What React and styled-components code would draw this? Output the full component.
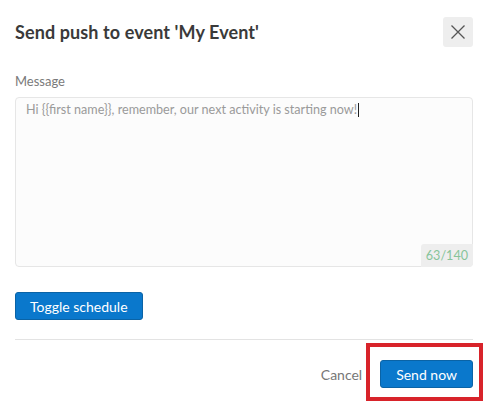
import React from 'react';
import styled, { createGlobalStyle } from 'styled-components';

const GlobalStyle = createGlobalStyle`
  html, body {
    margin: 0;
    padding: 0;
    background: #fff;
  }
  body {
    font-family: Lato, "Open Sans", "Liberation Sans", sans-serif;
    color: #333;
  }
  * {
    box-sizing: border-box;
  }
`;

const Modal = styled.div`
  width: 488px;
  height: 407px;
  padding: 17px 15px 0;
  display: flex;
  flex-direction: column;
`;

const Header = styled.div`
  display: flex;
  align-items: center;
  justify-content: space-between;
  height: 30px;
`;

const Title = styled.h2`
  margin: 0;
  font-size: 18px;
  font-weight: 700;
  color: #3a3a3a;
  letter-spacing: 0.1px;
`;

const CloseButton = styled.button`
  width: 30px;
  height: 30px;
  padding: 0;
  border: none;
  border-radius: 3px;
  background: #eeeeee;
  display: flex;
  align-items: center;
  justify-content: center;
  cursor: pointer;
`;

const Label = styled.label`
  display: block;
  margin-top: 26px;
  font-size: 13px;
  line-height: 16px;
  color: #7a7a7a;
`;

const MessageBox = styled.div`
  position: relative;
  margin-top: 8px;
  height: 170px;
  border: 1px solid #e6e6e6;
  border-radius: 4px;
  background: #fcfcfc;
  padding: 4px 10px;
  font-size: 12.6px;
  line-height: 16px;
  color: #9a9a9a;
`;

const Caret = styled.span`
  display: inline-block;
  width: 1px;
  height: 14px;
  margin-left: 1px;
  vertical-align: -3px;
  background: #222;
`;

const Counter = styled.span`
  position: absolute;
  right: -1px;
  bottom: -1px;
  padding: 3px 5px 3px 5px;
  border-radius: 3px 0 4px 0;
  background: #eeeeee;
  font-size: 12.6px;
  line-height: 17px;
  color: #86c49a;
`;

const Button = styled.button`
  height: 28px;
  padding: 0 ${({ $wide }) => ($wide ? '15px' : '14px')};
  border: 1px solid #0a63a6;
  border-radius: 3px;
  background: #0a78cc;
  color: #fff;
  font-family: inherit;
  font-size: 14px;
  cursor: pointer;
`;

const ScheduleRow = styled.div`
  margin-top: 25px;
`;

const Divider = styled.hr`
  margin: 19px 0 0;
  border: none;
  border-top: 1px solid #e3e3e3;
`;

const Footer = styled.div`
  display: flex;
  align-items: center;
  justify-content: flex-end;
  gap: 18px;
  margin-top: 20px;
`;

const CancelLink = styled.button`
  border: none;
  background: none;
  padding: 0;
  font-family: inherit;
  font-size: 14px;
  color: #777;
  cursor: pointer;
`;

const Highlight = styled.div`
  position: relative;
  &::after {
    content: '';
    position: absolute;
    left: -14px;
    right: -10px;
    top: -17px;
    bottom: -13px;
    border: 4px solid #d8232a;
    pointer-events: none;
  }
`;

const CloseIcon = () => (
  <svg width="16" height="16" viewBox="0 0 16 16" fill="none">
    <path d="M1.5 1.5L14.5 14.5M14.5 1.5L1.5 14.5" stroke="#555" strokeWidth="1.3" />
  </svg>
);

export default function App() {
  return (
    <>
      <GlobalStyle />
      <Modal>
        <Header>
          <Title>Send push to event 'My Event'</Title>
          <CloseButton aria-label="Close">
            <CloseIcon />
          </CloseButton>
        </Header>
        <Label>Message</Label>
        <MessageBox>
          Hi {'{{first name}}'}, remember, our next activity is starting now!
          <Caret />
          <Counter>63/140</Counter>
        </MessageBox>
        <ScheduleRow>
          <Button>Toggle schedule</Button>
        </ScheduleRow>
        <Divider />
        <Footer>
          <CancelLink>Cancel</CancelLink>
          <Highlight>
            <Button $wide>Send now</Button>
          </Highlight>
        </Footer>
      </Modal>
    </>
  );
}
